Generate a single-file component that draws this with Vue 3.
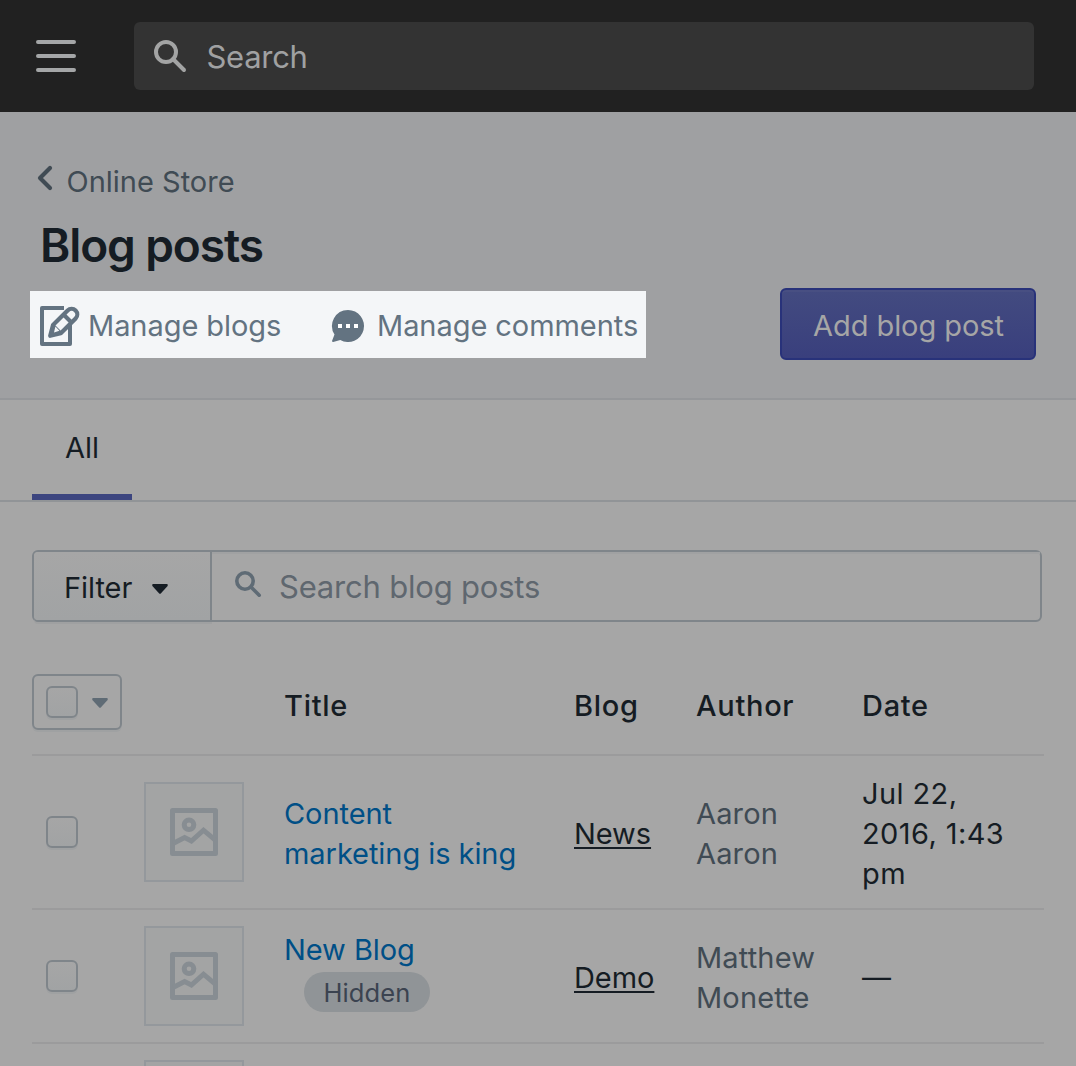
<script setup>
const posts = [
  { title: ['Content', 'marketing is king'], blog: 'News', author: ['Aaron', 'Aaron'], date: ['Jul 22,', '2016, 1:43', 'pm'] },
  { title: ['New Blog'], hidden: true, blog: 'Demo', author: ['Matthew', 'Monette'], date: ['—'] },
  { title: [], blog: '', author: [], date: [] },
]
</script>

<template>
  <div class="page">
    <header class="topbar">
      <svg class="menu" width="40" height="32" viewBox="0 0 40 32"><path d="M2 2h36M2 16h36M2 30h36" fill="none" stroke="#a4a6a7" stroke-width="4" stroke-linecap="round" /></svg>
      <div class="global-search">
        <svg width="32" height="32" viewBox="0 0 32 32" fill="none" stroke="#a3a4a4" stroke-width="4"><circle cx="12" cy="12" r="10" /><path d="M19 19L30 30" stroke-linecap="round" /></svg>
        <span>Search</span>
      </div>
    </header>

    <section class="heading">
      <a class="crumb">
        <svg width="14" height="24" viewBox="0 0 14 24"><path d="M12 2L2 12L12 22" fill="none" stroke="#404b54" stroke-width="4.2" stroke-linecap="round" stroke-linejoin="round" /></svg>
        <span>Online Store</span>
      </a>
      <h1>Blog posts</h1>
      <div class="action-row">
        <nav class="actions">
          <a class="blogs">
            <svg width="40" height="40" viewBox="0 0 40 40" fill="none" stroke="#637381" stroke-width="4" stroke-linejoin="round">
              <path d="M24 2H2v36h28V19" />
              <path d="M27.6 4.4a5.6 5.6 0 0 1 8 8L20.8 27.2L10.2 29.8l2.8-10.8z" fill="#f4f6f8" stroke-width="4.2" />
              <path d="M23.5 8.5l8 8" stroke-width="4" />
              <path d="M13.5 17.5l9 9L9 31z" fill="#637381" stroke="none" />
              <path d="M15.4 20.6l4 4.2l-5.4 1.8z" fill="#f4f6f8" stroke="none" />
            </svg>
            <span>Manage blogs</span>
          </a>
          <a class="comments">
            <svg width="32" height="32" viewBox="0 0 32 32"><path d="M16 0a16 16 0 1 1-7.7 30L1.2 32Q0 32 0 31L2.5 24.6A16 16 0 0 1 16 0z" fill="#637381" /><path d="M6 14h4v4H6zM14 14h4v4h-4zM22 14h4v4h-4z" fill="#fff" /></svg>
            <span>Manage comments</span>
          </a>
        </nav>
        <button class="primary"><span>Add blog post</span></button>
      </div>
    </section>

    <div class="tabs"><div class="tab">All</div></div>

    <main>
      <div class="filters">
        <div class="filter"><span>Filter</span><svg width="16" height="10" viewBox="0 0 16 10"><path d="M1 0h14q1.5.7.6 1.9L8.8 9.4q-.8.8-1.6 0L.4 1.9Q-.5.7 1 0z" fill="#151c23" /></svg></div>
        <div class="query">
          <svg width="26" height="26" viewBox="0 0 26 26" fill="none" stroke="#5f6b75" stroke-width="3.6"><circle cx="10" cy="10" r="8.2" /><path d="M16 16L24.2 24.2" stroke-linecap="round" /></svg>
          <span>Search blog posts</span>
        </div>
      </div>

      <div class="table">
        <div class="row head">
          <div class="bulk"><i class="check"></i><svg width="16" height="10" viewBox="0 0 16 10"><path d="M1 0h14q1.5.7.6 1.9L8.8 9.4q-.8.8-1.6 0L.4 1.9Q-.5.7 1 0z" fill="#5f6b75" /></svg></div>
          <span></span>
          <span class="h-title">Title</span><span class="h-blog">Blog</span><span class="h-author">Author</span><span class="h-date">Date</span>
        </div>
        <div v-for="(p, i) in posts" :key="i" class="row">
          <div class="pick"><i class="check"></i></div>
          <div class="thumb">
            <svg width="48" height="48" viewBox="0 0 48 48" fill="none" stroke="#878d92" stroke-width="5"><rect x="2.5" y="2.5" width="43" height="43" stroke-linejoin="round" /><circle cx="19" cy="16.8" r="4.8" /><path d="M3 35.5L14.6 29.6L21.4 33L33.5 22.2L45 31.8" /></svg>
          </div>
          <div class="title" :class="{ tagged: p.hidden }">
            <a v-for="t in p.title" :key="t">{{ t }}</a>
            <span v-if="p.hidden" class="badge"><span>Hidden</span></span>
          </div>
          <div class="blog"><a>{{ p.blog }}</a></div>
          <div class="author"><div v-for="(a, j) in p.author" :key="j">{{ a }}</div></div>
          <div class="date"><div v-for="d in p.date" :key="d">{{ d }}</div></div>
        </div>
      </div>
    </main>
  </div>
</template>

<style>
body { background: #a6a6a6; overflow: hidden; }
</style>

<style scoped>
* { box-sizing: border-box; }
svg { display: block; flex: none; overflow: visible; }
.page { width: 1076px; height: 1066px; overflow: hidden; background: #a6a6a6; color: #151c23; font: 400 29px/40px Inter, "Liberation Sans", sans-serif; letter-spacing: -.06px; white-space: nowrap; }
.topbar { height: 112px; background: #212121; display: flex; align-items: center; padding-left: 36px; }
.global-search { margin-left: 58px; width: 900px; height: 68px; border-radius: 6px; background: #333; display: flex; align-items: center; padding: 2px 0 0 20px; font-size: 31px; letter-spacing: -.3px; color: #a0a1a2; }
.global-search svg { margin-top: -2px; }
.global-search span { margin-left: 20.5px; }
.heading { height: 288px; background: #9fa0a2; border-bottom: 2px solid #95979a; padding: 50px 40px 0 30px; }
.crumb { height: 40px; display: flex; align-items: center; color: #404b54; padding-left: 8px; }
.crumb svg { margin-top: -8px; }
.crumb span { margin-left: 14.5px; letter-spacing: 0; }
h1 { margin: 15px 0 0 10px; font-size: 46px; line-height: 56px; font-weight: 600; letter-spacing: -1.1px; }
.action-row { display: flex; justify-content: space-between; margin-top: 15px; }
.actions { width: 616px; height: 67px; margin-top: 3px; background: #f4f6f8; color: #637381; display: flex; align-items: center; padding: 3px 0 0 10px; }
.actions a { display: flex; align-items: center; }
.actions span { margin-left: 8px; }
.blogs { width: 241px; }
.comments { margin-left: 51px; }
.comments svg { margin-right: 5px; }
.primary { width: 256px; height: 72px; padding: 4px 0 0 1px; border: 2px solid #28327a; border-radius: 6px; background: linear-gradient(#434b80, #393f7d); box-shadow: inset 0 2px 0 #484f82; color: #a6a6a6; font: inherit; letter-spacing: inherit; }
.tabs { height: 102px; border-bottom: 2px solid #919497; padding-left: 32px; }
.tab { width: 100px; height: 100px; border-bottom: 6px solid #3c457f; text-align: center; padding-top: 28px; }
main { padding: 48px 32px 0; }
.filters { display: flex; width: 1010px; height: 72px; border: 2px solid #7f858a; border-radius: 6px; }
.filter { width: 178px; border-right: 2px solid #7f858a; background: linear-gradient(#a6a6a6, #a1a3a4); box-shadow: 0 2px 0 #7f858a, 0 4px 0 #9fa0a1; display: flex; align-items: center; padding: 4px 0 0 30px; border-radius: 4px 0 0 4px; }
.filter svg { margin: 1px 0 0 20px; }
.query { flex: 1; display: flex; align-items: center; padding: 2px 0 0 23px; font-size: 31px; letter-spacing: -.2px; color: #5f676f; box-shadow: inset 0 2px 0 #a0a1a2; }
.query svg { margin-top: -6px; }
.query span { margin-left: 18px; }
.table { width: 1012px; margin-top: 32px; }
.row { display: grid; grid-template-columns: 112px 140px 290px 122px 166px 1fr; align-items: center; border-bottom: 2px solid #9b9b9c; padding: 16px 0; min-height: 134px; }
.head { min-height: 102px; height: 102px; font-weight: 500; letter-spacing: .7px; padding: 4px 0 0; }
.bulk { width: 90px; height: 56px; margin-top: -8px; border: 2px solid #7f858a; border-radius: 6px; display: flex; align-items: center; padding-left: 12px; box-shadow: 0 2px 0 #9fa1a2; }
.bulk svg { margin: 2px 0 0 14px; }
.check { display: block; width: 32px; height: 32px; border: 2px solid #7f858a; border-radius: 6px; background: linear-gradient(#a6a6a6, #a1a3a4); box-shadow: 0 2px 0 #9fa1a2; }
.pick { padding-left: 14px; }
.thumb { width: 100px; height: 100px; border: 2px solid #94989c; background: #a3a4a4; display: grid; place-items: center; }
.title { color: #004f86; }
.title a { display: block; }
.tagged { margin-top: -10px; }
.badge { display: block; width: 126px; height: 40px; margin: 2px 0 0 20px; border-radius: 20px; background: #909497; color: #3b4350; font-size: 25.5px; letter-spacing: .1px; text-align: center; padding-top: 1px; }
.blog, .author, .date { padding-top: 4px; }
.title:not(.tagged) { padding-top: 4px; }
.blog a { text-decoration: underline; text-decoration-thickness: 2px; text-underline-offset: 3px; text-decoration-skip-ink: none; }
.author { color: #404b54; letter-spacing: .15px; }
.date { margin: -2px 0; letter-spacing: .4px; }
</style>
